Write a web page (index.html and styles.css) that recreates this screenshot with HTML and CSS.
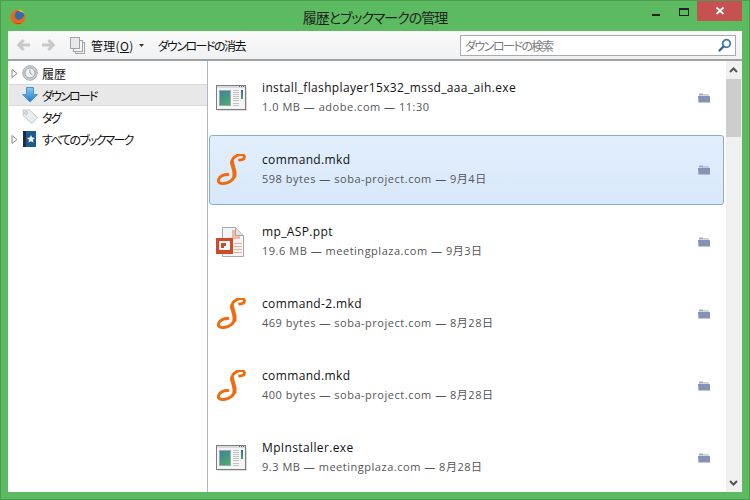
FILE: index.html
```html
<!DOCTYPE html>
<html lang="ja">
<head>
<meta charset="utf-8">
<title>履歴とブックマークの管理</title>
<link rel="stylesheet" href="styles.css">
</head>
<body>
<svg class="defs" width="0" height="0">
  <defs>
    <linearGradient id="scr" x1="0" y1="0" x2="0.6" y2="1"><stop offset="0" stop-color="#3f7fa6"/><stop offset="1" stop-color="#4fa86a"/></linearGradient>
    <linearGradient id="bar" x1="0" y1="0" x2="0" y2="1"><stop offset="0" stop-color="#2f62a8"/><stop offset="1" stop-color="#45ad62"/></linearGradient>
    <linearGradient id="dl" x1="0" y1="0" x2="0" y2="1"><stop offset="0" stop-color="#8cc8f0"/><stop offset="1" stop-color="#1e78c8"/></linearGradient>
    <symbol id="exe" viewBox="0 0 32 32">
      <rect x="0.5" y="3.500" width="29" height="24" fill="#f4f4f4" stroke="#7d7d7d"/>
      <rect x="30" y="5" width="1" height="24" fill="#ddd"/><rect x="2" y="28" width="29" height="1" fill="#ddd"/>
      <rect x="1" y="4" width="28" height="2" fill="#d6dbe0"/>
      <rect x="23" y="4" width="1" height="1" fill="#666"/><rect x="25" y="4" width="1" height="1" fill="#666"/><rect x="27" y="4" width="1" height="1" fill="#666"/>
      <rect x="3.500" y="8.500" width="11" height="15" fill="url(#scr)" stroke="#9aa9b8"/>
      <path d="M17 8.500h6M17 10.500h6M17 12.500h6M17 14.500h6M17 16.500h6M17 18.500h6M17 21.500h6M17 23.500h6" stroke="#c4c4c4"/>
      <rect x="25" y="8" width="2" height="9" fill="url(#bar)"/>
    </symbol>
    <symbol id="sam" viewBox="2 2 32 32">
      <path d="M25.500 8C28 8 30.500 7 30.500 4.500C30 2.500 26 2 23 3.500C19 5.500 17.500 9 18 12C18.500 15 21 19 20.500 23C20 28 15 31 10 31.500C6 32 3.500 30 4.500 27.500C6 24 10 22.500 14 22.500" fill="none" stroke="#f06a0e" stroke-width="2.800" stroke-linecap="round"/>
      <path d="M18 10C18 14 21.500 18 20.500 24" fill="none" stroke="#f06a0e" stroke-width="4" stroke-linecap="round"/>
    </symbol>
    <symbol id="folder" viewBox="0 0 12 10">
      <path d="M1 0.500h4v1h6v1H1z" fill="#a0a9c2"/>
      <path d="M0 3h12v6.500H0.500z" fill="#8492b3"/>
    </symbol>
  </defs>
</svg>
<div class="window">
  <header class="titlebar">
    <div class="title-left">
      <svg class="fx" width="16" height="16" viewBox="0 0 16 16" aria-hidden="true">
        <circle cx="8" cy="8" r="7.500" fill="#e8701a"/>
        <circle cx="9.500" cy="6.500" r="4.800" fill="#2f6db0"/>
        <path d="M8 .5C11 .5 14 2.500 15 6C14 4.500 12.500 3 10.500 2.800C9.500 2.200 8.500 1.500 8 .5z" fill="#f7c02e"/>
        <path d="M14.800 5.500C15.500 8 15 11 13 13C11 15 7 15.800 4.500 14.500C2 13 .5 10.500 .5 8C.8 6 1.500 4.500 2.500 3.500C2.500 7 4 10 7.500 10.800C10 11.300 12.500 10 14.800 5.500z" fill="#e36a18"/>
        <path d="M3 12.500C5 15 9 15.800 12 14C9 14.500 5.500 14.500 3 12.500z" fill="#b9341a"/>
      </svg>
    </div>
    <h1 class="title">履歴とブックマークの管理</h1>
    <div class="caption">
      <span class="cap-min"></span>
      <span class="cap-max"></span>
      <span class="cap-close"><svg width="10" height="10" viewBox="0 0 10 10"><path d="M1.500 1.500l7 6.500M8.500 1.500l-7 6.500" stroke="#fff" stroke-width="1.800" fill="none"/></svg></span>
    </div>
  </header>
  <div class="client">
    <div class="toolbar">
      <svg class="nav" width="14" height="14" viewBox="0 0 14 14"><path d="M6.500 2L2 7l4.500 5M2.500 7H13" fill="none" stroke="#c9c9c9" stroke-width="3.200"/></svg>
      <svg class="nav nav-fwd" width="14" height="14" viewBox="0 0 14 14"><path d="M7.500 2L12 7l-4.500 5M11.500 7H1" fill="none" stroke="#c9c9c9" stroke-width="3.200"/></svg>
      <svg class="organize" width="15" height="17" viewBox="0 0 15 17"><g fill="#f2f4f6" stroke="#a2a2a2"><rect x="5.500" y="5.500" width="9" height="11"/><rect x="3.500" y="3.500" width="9" height="11"/><rect x="0.500" y="0.500" width="9" height="11" fill="#e6e9ec"/></g></svg>
      <span class="tb-label">管理(<u>O</u>)</span>
      <svg class="caret" width="5" height="3" viewBox="0 0 5 3"><path d="M0 0h5L2.500 3z" fill="#333"/></svg>
      <span class="tb-clear">ダウンロードの消去</span>
      <div class="search">
        <span class="search-text">ダウンロードの検索</span>
        <svg width="14" height="14" viewBox="0 0 14 14"><circle cx="8.500" cy="5.500" r="3.800" fill="none" stroke="#3d78b0" stroke-width="1.800"/><path d="M5.500 8.500L1.500 12.500" stroke="#2d66a0" stroke-width="2.400" stroke-linecap="round"/></svg>
      </div>
    </div>
    <div class="panes">
      <nav class="sidebar">
        <div class="tree-row">
          <svg class="twisty" width="7" height="9" viewBox="0 0 7 9"><path d="M1 .5L6 4.500 1 8.500z" fill="#fff" stroke="#8a8a8a"/></svg>
          <svg class="tree-icon" width="16" height="16" viewBox="0 0 16 16"><circle cx="8" cy="8" r="7.300" fill="#c9ced1" stroke="#a9aeb2"/><circle cx="8" cy="8" r="5" fill="#eef1f3" stroke="#a0a6ab"/><path d="M8 4.500V8l2.500 2" stroke="#9a9fa3" fill="none"/></svg>
          <span>履歴</span>
        </div>
        <div class="tree-row tree-selected">
          <span class="twisty-space"></span>
          <svg class="tree-icon" width="16" height="16" viewBox="0 0 16 16"><path d="M4.500 .5h7v7H15.500L8 15 .5 7.500h4z" fill="url(#dl)" stroke="#4a94d4" stroke-linejoin="round"/></svg>
          <span class="kana">ダウンロード</span>
        </div>
        <div class="tree-row">
          <span class="twisty-space"></span>
          <svg class="tree-icon" width="16" height="16" viewBox="0 0 16 16"><path d="M1 1h6.500l8 7.500-5.500 6L1.500 7z" fill="#e9ecef" stroke="#c2c6ca"/><circle cx="4" cy="4" r="1.300" fill="#fff" stroke="#b8b8b8"/></svg>
          <span class="kana">タグ</span>
        </div>
        <div class="tree-row">
          <svg class="twisty" width="7" height="9" viewBox="0 0 7 9"><path d="M1 .5L6 4.500 1 8.500z" fill="#fff" stroke="#8a8a8a"/></svg>
          <svg class="tree-icon" width="16" height="16" viewBox="0 0 16 16"><rect x="1" y="0" width="13" height="16" fill="#1f5a8c"/><rect x="1" y="0" width="3" height="16" fill="#1e2d3c"/><path d="M9 4l1.200 2.600 2.800.3-2.100 1.900.6 2.800L9 10.200 6.500 11.600l.6-2.800L5 6.900l2.800-.3z" fill="#eef3f8"/></svg>
          <span class="kana">すべてのブックマーク</span>
        </div>
      </nav>
      <main class="content">
        <div class="list">
          <div class="item">
            <svg class="item-icon" width="32" height="32"><use href="#exe"/></svg>
            <div class="item-text"><div class="item-name">install_flashplayer15x32_mssd_aaa_aih.exe</div><div class="item-meta">1.0 MB — adobe.com — 11:30</div></div>
            <svg class="item-folder" width="12" height="10"><use href="#folder"/></svg>
          </div>
          <div class="item item-selected">
            <svg class="item-icon" width="32" height="32"><use href="#sam"/></svg>
            <div class="item-text"><div class="item-name">command.mkd</div><div class="item-meta">598 bytes — soba-project.com — 9月4日</div></div>
            <svg class="item-folder" width="12" height="10"><use href="#folder"/></svg>
          </div>
          <div class="item">
            <svg class="item-icon" width="32" height="32" viewBox="0 0 32 32">
              <path d="M6.500 1.500H19.500L27.500 9.500V30.500H6.500z" fill="#f5f5f5" stroke="#a8a8a8"/>
              <path d="M19.500 1.500V9.500H27.500" fill="#e2e2e2" stroke="#a8a8a8"/>
              <path d="M16 4h3v6h5v3h-8z" fill="#f2b9a3"/>
              <path d="M18 17.500h8M18 20.500h8M18 23.500h8M18 26.500h8" stroke="#f3ac94"/>
              <rect x="0" y="12" width="17" height="16" fill="#cf4a2a"/>
              <rect x="3" y="15" width="11" height="9" rx="1" fill="#fff"/>
              <path d="M5 17h5v3H8v2H5z" fill="#cf4a2a"/>
            </svg>
            <div class="item-text"><div class="item-name">mp_ASP.ppt</div><div class="item-meta">19.6 MB — meetingplaza.com — 9月3日</div></div>
            <svg class="item-folder" width="12" height="10"><use href="#folder"/></svg>
          </div>
          <div class="item">
            <svg class="item-icon" width="32" height="32"><use href="#sam"/></svg>
            <div class="item-text"><div class="item-name">command-2.mkd</div><div class="item-meta">469 bytes — soba-project.com — 8月28日</div></div>
            <svg class="item-folder" width="12" height="10"><use href="#folder"/></svg>
          </div>
          <div class="item">
            <svg class="item-icon" width="32" height="32"><use href="#sam"/></svg>
            <div class="item-text"><div class="item-name">command.mkd</div><div class="item-meta">400 bytes — soba-project.com — 8月28日</div></div>
            <svg class="item-folder" width="12" height="10"><use href="#folder"/></svg>
          </div>
          <div class="item">
            <svg class="item-icon" width="32" height="32"><use href="#exe"/></svg>
            <div class="item-text"><div class="item-name">MpInstaller.exe</div><div class="item-meta">9.3 MB — meetingplaza.com — 8月28日</div></div>
            <svg class="item-folder" width="12" height="10"><use href="#folder"/></svg>
          </div>
        </div>
        <div class="scrollbar">
          <svg class="sb-arrow" width="9" height="6" viewBox="0 0 9 6"><path d="M1 5l3.500-3.500L8 5" fill="none" stroke="#555" stroke-width="2"/></svg>
          <div class="sb-thumb"></div>
          <div class="sb-fill"></div>
          <svg class="sb-arrow" width="9" height="6" viewBox="0 0 9 6"><path d="M1 1l3.500 3.500L8 1" fill="none" stroke="#555" stroke-width="2"/></svg>
        </div>
      </main>
    </div>
  </div>
</div>
</body>
</html>
```

FILE: styles.css
```css
* { box-sizing: border-box; }
html, body { margin: 0; padding: 0; }
body { width: 750px; height: 500px; overflow: hidden; font-family: "Noto Sans CJK JP", "Noto Sans", sans-serif; font-feature-settings: "palt"; }
.defs { display: block; height: 0; }
.window { width: 750px; height: 500px; background: #5cbb60; border: 1px solid #4c9c50; display: flex; flex-direction: column; padding: 0 7px 7px; }
.titlebar { height: 30px; display: grid; grid-template-columns: 1fr auto 1fr; align-items: start; flex: none; }
.title-left { display: flex; }
.fx { margin: 8px 0 0 2px; flex: none; }
.title { margin: 0; text-align: center; font-size: 14px; font-weight: 400; color: #222; line-height: 32px; letter-spacing: -1px; }
.caption { display: flex; align-items: flex-start; justify-content: flex-end; }
.cap-min { width: 8px; height: 2px; background: #222; margin: 13px 19px 0 0; }
.cap-max { width: 10px; height: 8px; border: 1px solid #222; border-top-width: 2px; margin: 7px 8px 0 0; }
.cap-close { width: 45px; height: 20px; background: #c75050; display: flex; align-items: center; justify-content: center; }
.client { flex: 1; display: flex; flex-direction: column; background: #fff; min-height: 0; }
.toolbar { height: 30px; flex: none; display: flex; align-items: center; background: linear-gradient(#f9f9fa, #f1f2f3); border-bottom: 2px solid #a0a0a0; padding-left: 9px; font-size: 12px; color: #111; }
.nav-fwd { margin-left: 10px; }
.organize { margin-left: 15px; }
.tb-label { margin-left: 6px; letter-spacing: .3px; }
.caret { margin-left: 5px; }
.tb-clear { margin-left: 14px; letter-spacing: -1.5px; }
.search { margin-left: auto; margin-right: 6px; width: 276px; height: 21px; background: #fff; border: 1px solid #a8abb0; display: flex; align-items: center; justify-content: space-between; padding: 0 3px 0 4px; }
.search-text { color: #7c7c7c; font-size: 12px; letter-spacing: -1.5px; }
.panes { flex: 1; display: flex; min-height: 0; }
.sidebar { width: 200px; flex: none; border-right: 1px solid #aeb6c6; padding-top: 1px; font-size: 12px; color: #111; }
.kana { letter-spacing: -1.8px; }
.tree-row { height: 22px; display: flex; align-items: center; padding-left: 3px; }
.tree-selected { background: #e8e8e8; border-top: 1px solid #dadada; border-bottom: 1px solid #dadada; margin: 0 0 0 1px; padding-left: 2px; }
.twisty, .twisty-space { width: 7px; flex: none; display: block; }
.tree-icon { margin: 0 4px 0 4px; flex: none; }
.content { flex: 1; display: flex; min-width: 0; }
.list { flex: 1; padding: 2px 2px 0 1px; display: flex; flex-direction: column; gap: 2px; overflow: hidden; min-width: 0; }
.item { height: 70px; flex: none; display: flex; align-items: center; padding-left: 6px; border: 1px solid transparent; border-radius: 3px; }
.item-selected { background: linear-gradient(#e2eefc, #d8e8fa); border-color: #88aed6; }
.item-icon { flex: none; }
.item-text { margin-left: 14px; flex: 1; min-width: 0; }
.item-name { font-family: "Open Sans", "Noto Sans", sans-serif; font-size: 12px; line-height: 18px; color: #111; letter-spacing: .36px; font-feature-settings: normal; }
.item-meta { font-family: "Open Sans", "Noto Sans CJK JP", sans-serif; font-size: 11px; line-height: 16px; color: #555; margin-top: 2px; padding-bottom: 2px; letter-spacing: .52px; font-feature-settings: normal; }
.item-folder { flex: none; margin-right: 13px; }
.scrollbar { width: 16px; flex: none; background: #f0f0f0; display: flex; flex-direction: column; align-items: center; padding-right: 1px; }
.sb-arrow { flex: none; margin: 6px 0; }
.sb-thumb { width: 15px; height: 58px; background: #cdcdcd; flex: none; }
.sb-fill { flex: 1; }
```
